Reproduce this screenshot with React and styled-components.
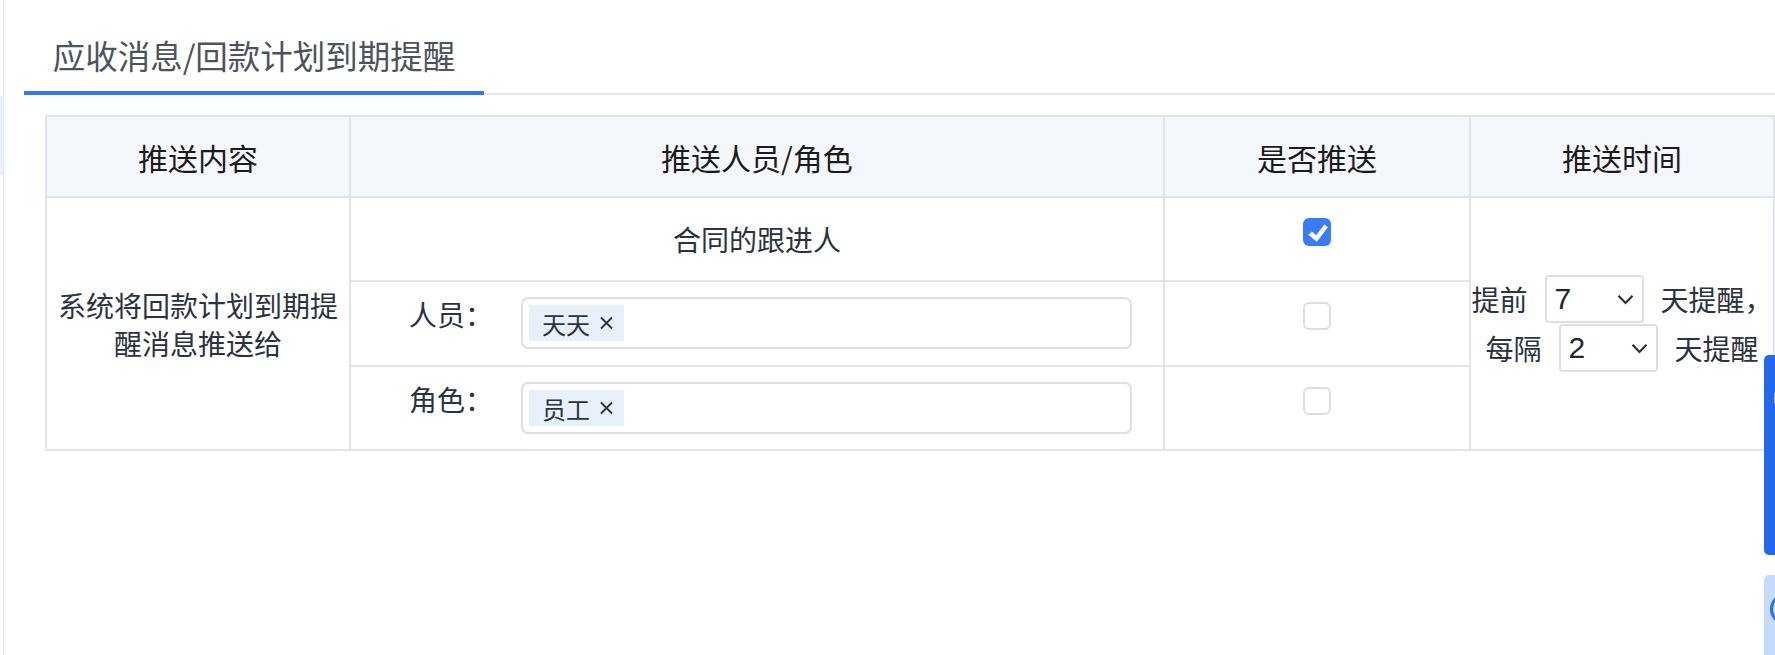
import React from "react"
import styled, { createGlobalStyle } from "styled-components"

const GlobalStyle = createGlobalStyle`
  html, body {
    margin: 0;
    padding: 0;
    background: #fff;
    overflow: hidden;
  }
  body {
    font-family: "Noto Sans CJK SC", "Noto Sans", sans-serif;
    color: #2b3240;
  }
  * {
    box-sizing: border-box;
  }
`

const Page = styled.div`
  position: relative;
  display: flex;
  width: 1775px;
  height: 655px;
`

const Edge = styled.div`
  flex: none;
  width: 4px;
  padding-top: 96px;
  border-right: 1px solid #e4e7ec;
  &::before {
    content: "";
    display: block;
    height: 79px;
    background: #e9f1fd;
  }
`

const Main = styled.main`
  flex: 1;
  min-width: 0;
  padding-top: 32px;
`

const TabBar = styled.div`
  display: flex;
  margin-left: 20px;
  border-bottom: 2px solid #e4e7ed;
`

const Tab = styled.div`
  width: 460px;
  margin-bottom: -2px;
  padding-bottom: 13px;
  border-bottom: 4px solid #3277f6;
  text-align: center;
  font-size: 32.5px;
  line-height: 46px;
  color: #4d535d;
`

const Grid = styled.div`
  display: grid;
  grid-template-columns: 304px 814px 306px 304px;
  grid-template-rows: 81px 84px 85px 84px;
  width: 1730px;
  margin: 20px 0 0 41px;
  border-left: 2px solid #dfe3ea;
  border-top: 2px solid #dfe3ea;
`

const Cell = styled.div`
  border-right: 2px solid #dfe3ea;
  border-bottom: 2px solid #dfe3ea;
  font-size: 28px;
  color: #2b3240;
`

const HeadCell = styled(Cell)`
  display: flex;
  align-items: center;
  justify-content: center;
  background: #f4f7fc;
  font-size: 30px;
  color: #1b1b1b;
`

const SpanCell = styled(Cell)`
  grid-row: 2 / span 3;
  grid-column: ${p => p.$col};
`

const ContentCell = styled(SpanCell)`
  display: flex;
  align-items: center;
  justify-content: center;
  padding: 0 10px;
  text-align: center;
  line-height: 38px;
`

const CenterCell = styled(Cell)`
  display: flex;
  align-items: center;
  justify-content: center;
`

const FieldCell = styled(Cell)`
  display: flex;
  align-items: flex-start;
  padding: 15px 31px 0 58px;
`

const Label = styled.span`
  flex: none;
  width: 112px;
  margin-top: -2px;
  line-height: 38px;
`

const TagInput = styled.div`
  flex: 1;
  display: flex;
  align-items: flex-start;
  height: 52px;
  padding: 6px;
  border: 2px solid #dcdfe6;
  border-radius: 7px;
`

const Tag = styled.span`
  display: inline-flex;
  align-items: center;
  gap: 9px;
  height: 36px;
  padding: 0 10px 0 13px;
  background: #e8f1fb;
  font-size: 24px;
  color: #2b3240;
`

const CheckCell = styled(Cell)`
  display: flex;
  justify-content: center;
  align-items: flex-start;
  padding-top: 20px;
`

const Box = styled.span`
  display: flex;
  align-items: center;
  justify-content: center;
  width: 28px;
  height: 28px;
  border-radius: 6px;
  background: ${p => (p.$checked ? "#3a7cf7" : "#fff")};
  border: ${p => (p.$checked ? "none" : "2px solid #d9dde4")};
`

const TimeCell = styled(SpanCell)`
  display: flex;
  flex-direction: column;
  justify-content: center;
  gap: 1px;
`

const TimeLine = styled.div`
  display: flex;
  align-items: center;
  justify-content: center;
  gap: 17px;
  height: 48px;
  white-space: nowrap;
`

const Select = styled.div`
  display: flex;
  align-items: center;
  justify-content: space-between;
  width: 99px;
  height: 48px;
  padding: 0 8px;
  border: 2px solid #dcdfe6;
  border-radius: 4px;
  font-family: "Liberation Sans", Arial, sans-serif;
  font-size: 30px;
  color: #1e2430;
`

const SideDock = styled.div`
  position: absolute;
  right: 0;
  top: 355px;
  width: 11px;
  height: 200px;
  background: #2468f2;
  border-radius: 5px 0 0 5px;
  &::after {
    content: "";
    position: absolute;
    right: 0;
    top: 38px;
    width: 1px;
    height: 10px;
    background: #9fbdf8;
  }
`

const HelpDock = styled.div`
  position: absolute;
  right: 0;
  top: 575px;
  width: 11px;
  height: 80px;
  overflow: hidden;
  background: #c4dbfd;
  border-radius: 5px 0 0 0;
  &::after {
    content: "";
    position: absolute;
    left: 6px;
    top: 18px;
    width: 26px;
    height: 26px;
    border: 3px solid #2f6ff0;
    border-radius: 50%;
  }
`

const CloseIcon = () => (
  <svg width="15" height="14" viewBox="0 0 15 14">
    <path d="M2 1.5 L13 12.5 M13 1.5 L2 12.5" stroke="#2b3240" strokeWidth="1.8" fill="none" />
  </svg>
)

const Chevron = () => (
  <svg width="17" height="11" viewBox="0 0 17 11">
    <polyline points="1.5,1.8 8.5,9 15.5,1.8" stroke="#2b2f36" strokeWidth="2.2" fill="none" />
  </svg>
)

const Checkbox = ({ checked }) => (
  <Box $checked={checked}>
    {checked && (
      <svg width="28" height="28" viewBox="0 0 28 28">
        <path d="M5.4 16.8 L8.9 13.6 L13 17.2 L21.4 6.6 L24.9 9.2 L13.8 23.8 Z" fill="#fff" />
      </svg>
    )}
  </Box>
)

const Field = ({ label, value }) => (
  <FieldCell>
    <Label>{label}：</Label>
    <TagInput>
      <Tag>
        {value}
        <CloseIcon />
      </Tag>
    </TagInput>
  </FieldCell>
)

export default function App() {
  return (
    <Page>
      <GlobalStyle />
      <Edge />
      <Main>
        <TabBar>
          <Tab>应收消息/回款计划到期提醒</Tab>
        </TabBar>
        <Grid>
          <HeadCell>推送内容</HeadCell>
          <HeadCell>推送人员/角色</HeadCell>
          <HeadCell>是否推送</HeadCell>
          <HeadCell>推送时间</HeadCell>

          <ContentCell $col={1}>系统将回款计划到期提醒消息推送给</ContentCell>
          <CenterCell>合同的跟进人</CenterCell>
          <CheckCell>
            <Checkbox checked />
          </CheckCell>
          <TimeCell $col={4}>
            <TimeLine>
              <span>提前</span>
              <Select>
                7<Chevron />
              </Select>
              <span>天提醒，</span>
            </TimeLine>
            <TimeLine>
              <span>每隔</span>
              <Select>
                2<Chevron />
              </Select>
              <span>天提醒</span>
            </TimeLine>
          </TimeCell>

          <Field label="人员" value="天天" />
          <CheckCell>
            <Checkbox />
          </CheckCell>

          <Field label="角色" value="员工" />
          <CheckCell>
            <Checkbox />
          </CheckCell>
        </Grid>
      </Main>
      <SideDock />
      <HelpDock />
    </Page>
  )
}
